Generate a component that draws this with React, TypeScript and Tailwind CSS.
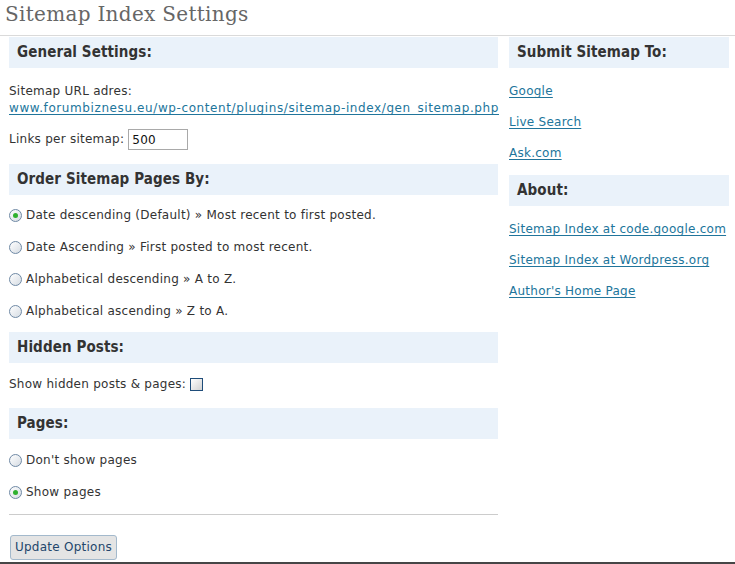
const sans = "font-['DejaVu_Sans','Verdana',sans-serif]";

function SectionHead({ children }: { children: React.ReactNode }) {
  return (
    <div className="flex h-[31px] items-center bg-[#eaf2fa] pl-[8px]">
      <h3 className="font-['DejaVu_Sans_Condensed','DejaVu_Sans',sans-serif] text-[15px] font-bold leading-none tracking-[0.1px] text-[#333]">
        {children}
      </h3>
    </div>
  );
}

function Radio({ checked }: { checked?: boolean }) {
  return (
    <span className="flex h-[13px] w-[13px] shrink-0 items-center justify-center rounded-full border border-[#6f89a5] bg-linear-to-br from-white to-[#d6dce3]">
      {checked && <span className="h-[5px] w-[5px] rounded-full bg-[#2fb12f]" />}
    </span>
  );
}

function RadioRow({ label, checked }: { label: string; checked?: boolean }) {
  return (
    <label className="flex h-[32px] items-center gap-[4px]">
      <Radio checked={checked} />
      <span>{label}</span>
    </label>
  );
}

function SideLink({ children }: { children: React.ReactNode }) {
  return (
    <div className="flex h-[31px] items-center">
      <a href="#" className="text-[#21759b] underline underline-offset-2">
        {children}
      </a>
    </div>
  );
}

export default function App() {
  return (
    <div className={`${sans} flex h-[564px] w-[735px] flex-col overflow-hidden bg-white text-[12px] leading-[17px] tracking-[0.25px] text-[#333]`}>
      {/* title */}
      <div className="h-[36px] border-b border-[#dadada] pl-[5px] pt-[2px]">
        <h2 className="font-['DejaVu_Serif',Georgia,serif] text-[20px] leading-[24px] tracking-[0.3px] text-[#666]">
          Sitemap Index Settings
        </h2>
      </div>

      <div className="mt-[1px] flex gap-[11px] pl-[9px]">
        {/* main options */}
        <div className="flex w-[489px] flex-col">
          <SectionHead>General Settings:</SectionHead>

          <p className="mt-[15px]">Sitemap URL adres:</p>
          <a href="#" className="whitespace-nowrap tracking-[0.6px] text-[#21759b] underline underline-offset-2">
            www.forumbiznesu.eu/wp-content/plugins/sitemap-index/gen_sitemap.php
          </a>

          <div className="mt-[12px] flex items-center gap-[4px]">
            <span>Links per sitemap:</span>
            <input
              defaultValue="500"
              className="h-[21px] w-[60px] border border-[#a9a9a9] px-[3px] text-[12px] text-[#111] outline-none"
            />
          </div>

          <div className="mt-[14px]">
            <SectionHead>Order Sitemap Pages By:</SectionHead>
          </div>
          <div className="mt-[4px] flex flex-col">
            <RadioRow checked label="Date descending (Default) » Most recent to first posted." />
            <RadioRow label="Date Ascending » First posted to most recent." />
            <RadioRow label="Alphabetical descending » A to Z." />
            <RadioRow label="Alphabetical ascending » Z to A." />
          </div>

          <div className="mt-[5px]">
            <SectionHead>Hidden Posts:</SectionHead>
          </div>
          <label className="mt-[5px] flex h-[32px] items-center gap-[4px]">
            <span>Show hidden posts &amp; pages:</span>
            <span className="h-[13px] w-[13px] border border-[#1f4d7a] bg-linear-to-br from-white to-[#d2d2d2]" />
          </label>

          <div className="mt-[8px]">
            <SectionHead>Pages:</SectionHead>
          </div>
          <div className="mt-[5px] flex flex-col">
            <RadioRow label="Don't show pages" />
            <RadioRow checked label="Show pages" />
          </div>

          <hr className="mt-[6px] border-t border-[#cccccc]" />

          <div className="mt-[20px]">
            <button className="ml-[1px] h-[25px] w-[107px] rounded-[3px] border border-[#a3b9cc] bg-[#e4e4e4] text-[12px] tracking-[0.25px] text-[#23466b]">
              Update Options
            </button>
          </div>
        </div>

        {/* sidebar */}
        <div className="flex w-[220px] flex-col">
          <SectionHead>Submit Sitemap To:</SectionHead>
          <div className="mt-[8px]">
            <SideLink>Google</SideLink>
            <SideLink>Live Search</SideLink>
            <SideLink>Ask.com</SideLink>
          </div>

          <div className="mt-[6px]">
            <SectionHead>About:</SectionHead>
          </div>
          <div className="mt-[8px]">
            <SideLink>Sitemap Index at code.google.com</SideLink>
            <SideLink>Sitemap Index at Wordpress.org</SideLink>
            <SideLink>Author's Home Page</SideLink>
          </div>
        </div>
      </div>

      <div className="mt-auto h-[2px] bg-[#464646]" />
    </div>
  );
}
